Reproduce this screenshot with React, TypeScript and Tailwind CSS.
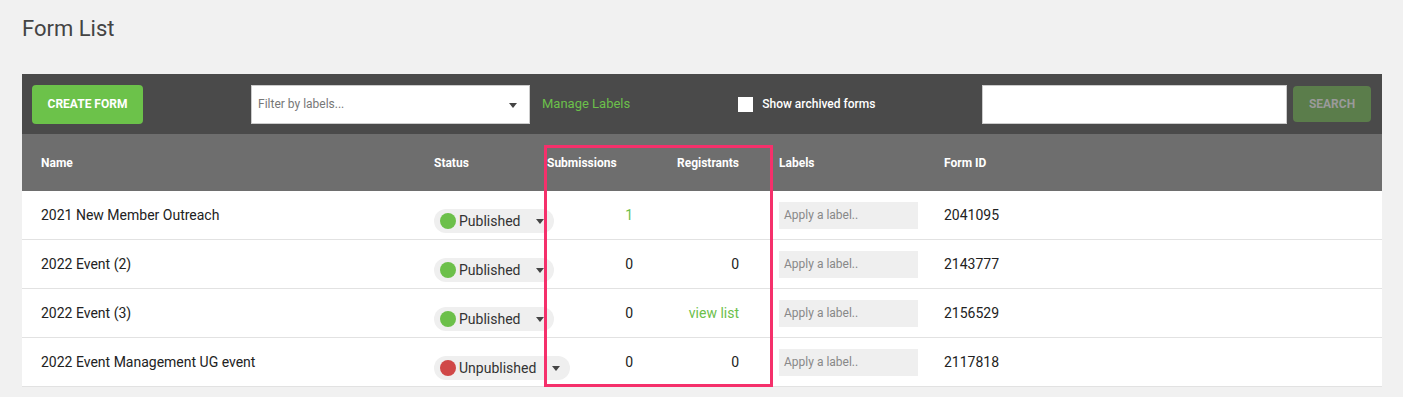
import React from "react";

type Row = {
  name: string;
  published: boolean;
  submissions: React.ReactNode;
  registrants: React.ReactNode;
  id: string;
};

const rows: Row[] = [
  { name: "2021 New Member Outreach", published: true, submissions: <span className="text-[#6cc04a]">1</span>, registrants: "", id: "2041095" },
  { name: "2022 Event (2)", published: true, submissions: "0", registrants: "0", id: "2143777" },
  { name: "2022 Event (3)", published: true, submissions: "0", registrants: <span className="text-[#6cc04a]">view list</span>, id: "2156529" },
  { name: "2022 Event Management UG event", published: false, submissions: "0", registrants: "0", id: "2117818" },
];

const cols = "grid grid-cols-[393px_113px_130px_102px_165px_1fr] pl-[19px]";

function Caret({ className = "" }: { className?: string }) {
  return (
    <span
      className={`inline-block h-0 w-0 border-x-[4px] border-t-[5px] border-x-transparent border-t-[#444] ${className}`}
    />
  );
}

function StatusPill({ published }: { published: boolean }) {
  return (
    <div className="mt-[10px] inline-flex h-[24px] items-center rounded-full bg-[#efefef] pl-[6px] pr-[10px]">
      <span className={`h-[16px] w-[16px] rounded-full ${published ? "bg-[#6cc04a]" : "bg-[#d04848]"}`} />
      <span className="ml-[3px] text-[14px] text-[#333]">{published ? "Published" : "Unpublished"}</span>
      <Caret className="ml-[16px]" />
    </div>
  );
}

export default function App() {
  return (
    <div className="min-h-[397px] bg-[#f1f1f1] font-['Roboto',sans-serif]">
      <h1 className="px-[22px] pt-[15px] pb-[31px] text-[22px] leading-[28px] text-[#444]">Form List</h1>
      <div className="relative ml-[22px] mr-[21px]">
        {/* toolbar */}
        <div className="flex h-[60px] items-center bg-[#4a4a4a] pl-[10px] pr-[11px]">
          <button className="h-[39px] w-[111px] rounded-[4px] bg-[#6cc24a] text-[12px] font-bold text-white">
            CREATE FORM
          </button>
          <div className="ml-[108px] flex h-[39px] w-[279px] items-center justify-between border border-[#ccc] bg-white pl-[6px] pr-[12px]">
            <span className="text-[12px] text-[#777]">Filter by labels...</span>
            <Caret className="mt-[2px]" />
          </div>
          <span className="ml-[12px] text-[13px] text-[#6cc04a]">Manage Labels</span>
          <span className="ml-[108px] h-[15px] w-[15px] bg-white" />
          <span className="ml-[9px] text-[12px] font-medium text-white">Show archived forms</span>
          <div className="ml-auto h-[39px] w-[305px] border border-[#ccc] bg-white" />
          <button className="ml-[6px] h-[36px] w-[78px] rounded-[4px] bg-[#5b7d4b] text-[12px] font-bold text-[#9a9a9a]">
            SEARCH
          </button>
        </div>
        {/* header */}
        <div className={`${cols} h-[57px] items-center bg-[#6e6e6e] text-[12px] font-bold text-white`}>
          <span>Name</span>
          <span>Status</span>
          <span>Submissions</span>
          <span>Registrants</span>
          <span>Labels</span>
          <span>Form ID</span>
        </div>
        {/* rows */}
        <div className="bg-white">
          {rows.map((r) => (
            <div key={r.id} className={`${cols} h-[49px] items-center border-b border-[#e2e2e2] text-[14px] text-[#222]`}>
              <span>{r.name}</span>
              <div className="self-start pt-[8px]">
                <StatusPill published={r.published} />
              </div>
              <span className="pr-[44px] text-right">{r.submissions}</span>
              <span className="pr-[40px] text-right">{r.registrants}</span>
              <div className="flex h-[27px] w-[139px] items-center bg-[#efefef] pl-[5px] text-[12px] text-[#888]">
                Apply a label..
              </div>
              <span>{r.id}</span>
            </div>
          ))}
        </div>
        {/* highlight annotation */}
        <div className="pointer-events-none absolute left-[522px] top-[71px] h-[242px] w-[229px] border-[3px] border-[#f5306b]" />
      </div>
    </div>
  );
}
